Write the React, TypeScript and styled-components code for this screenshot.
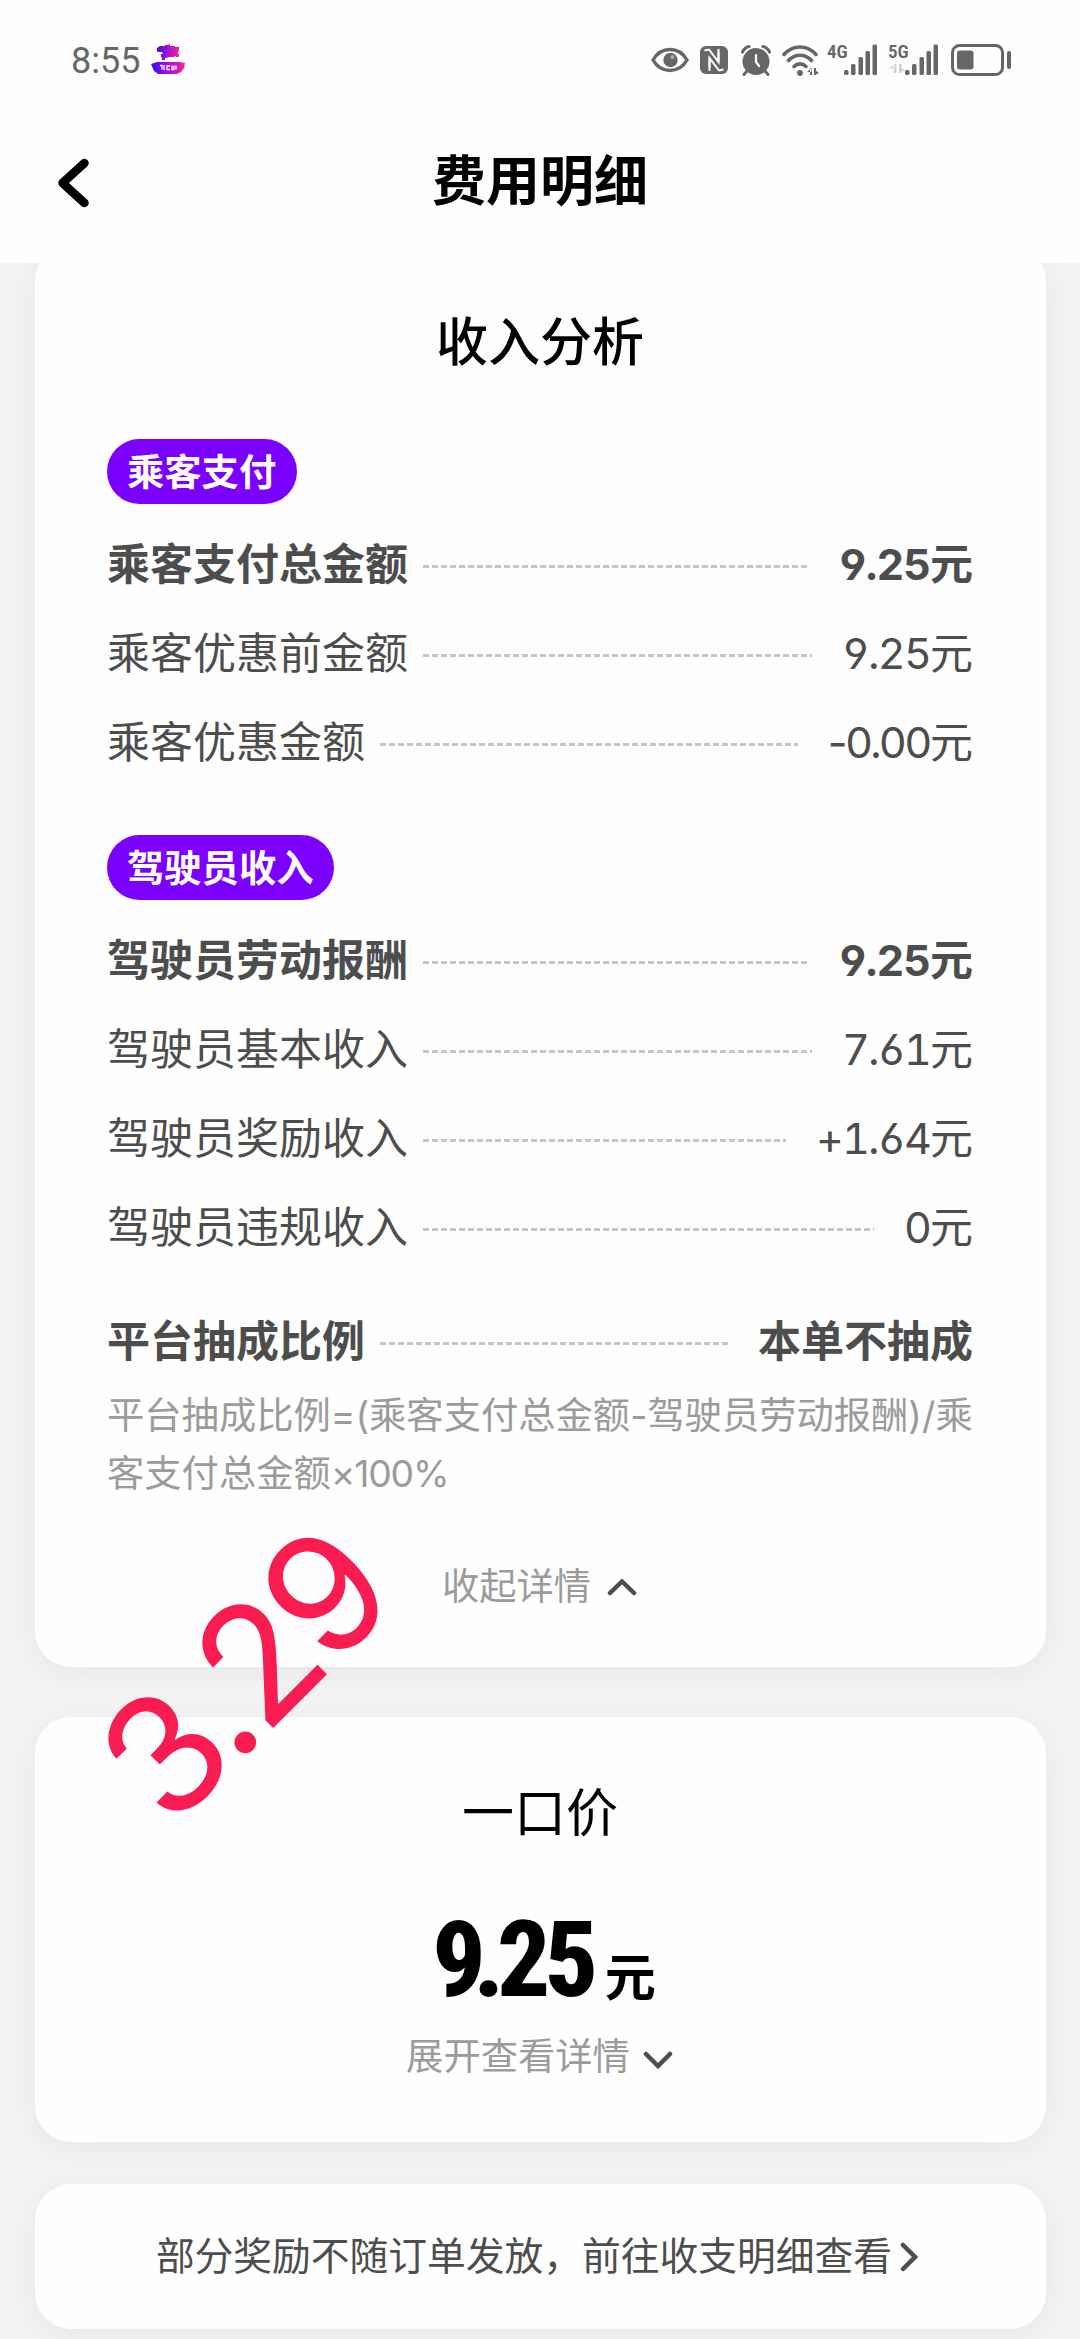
import React from "react";
import styled, { createGlobalStyle } from "styled-components";

const CJK = '"Noto Sans CJK SC", sans-serif';
const MIXED = 'Inter, "Noto Sans CJK SC", sans-serif';
const INK = "#4d4d4d";
const MUTED = "#9b9b9b";

const GlobalStyle = createGlobalStyle`
  * { box-sizing: border-box; }
  body { margin: 0; background: #f3f3f3; font-family: ${CJK}; }
`;

const Screen = styled.div`
  position: relative;
  width: 1080px;
  height: 2339px;
  overflow: hidden;
  background: #f3f3f3;
  color: ${INK};
`;

const Header = styled.header`
  position: relative;
  z-index: 1;
  height: 263px;
  background: #fefefe;
`;

const StatusBar = styled.div`
  display: flex;
  align-items: center;
  height: 120px;
  padding: 0 69px 0 71px;
  color: #666;
`;

const Clock = styled.span`
  font: 400 36px/40px Roboto, sans-serif;
  margin: 2px 10px 0 0;
  width: 70px;
`;

const StatusIcons = styled.div`
  display: flex;
  align-items: center;
  margin-left: auto;
`;

const Glyph = styled.svg<{ $gap?: number }>`
  display: block;
  flex: none;
  margin-left: ${(p) => p.$gap ?? 0}px;
`;

const Network = styled.div<{ $gap: number }>`
  display: flex;
  flex-direction: column;
  width: 17px;
  height: 32px;
  margin-left: ${(p) => p.$gap}px;
`;

const NetworkLabel = styled.span`
  font: 600 19px/15px "Roboto Condensed", Roboto, sans-serif;
  font-stretch: 75%;
  white-space: nowrap;
`;

const NavBar = styled.div`
  display: grid;
  grid-template-columns: 90px 1fr 90px;
  align-items: center;
  height: 115px;
`;

const BackButton = styled.button`
  display: flex;
  align-items: center;
  height: 100px;
  padding: 10px 0 0 56px;
  border: 0;
  background: none;
`;

const PageTitle = styled.h1`
  margin: 0;
  text-align: center;
  font-size: 54px;
  font-weight: 700;
  line-height: 115px;
  color: #000;
`;

const Content = styled.main`
  display: flex;
  flex-direction: column;
  margin-top: -18px;
  padding: 0 34px 0 35px;
`;

const Card = styled.section<{ $height: number; $gap?: number }>`
  flex: none;
  height: ${(p) => p.$height}px;
  margin-top: ${(p) => p.$gap ?? 0}px;
  padding: 0 73px 0 72px;
  border-radius: 36px;
  background: #fefefe;
  box-shadow: 0 6px 30px rgba(0, 0, 0, 0.055);
`;

const CardTitle = styled.h2<{ $top: number; $weight: number }>`
  margin: 0;
  padding-top: ${(p) => p.$top}px;
  text-align: center;
  font-size: 52px;
  font-weight: ${(p) => p.$weight};
  line-height: 80px;
  color: #000;
`;

const Pill = styled.div<{ $top: number }>`
  width: fit-content;
  height: 65px;
  margin: ${(p) => p.$top}px 0 13px;
  padding: 0 21px 0 20px;
  border-radius: 33px;
  background: #7c00ff;
  color: #fff;
  font-size: 37.3px;
  font-weight: 700;
  line-height: 63px;
`;

const Row = styled.div<{ $strong?: boolean; $top?: number }>`
  display: flex;
  align-items: baseline;
  height: 89px;
  margin-top: ${(p) => p.$top ?? 0}px;
  font-size: 43px;
  font-weight: ${(p) => (p.$strong ? 700 : 400)};
  line-height: 89px;
  white-space: nowrap;
`;

const Leader = styled.span`
  flex: 1;
  align-self: center;
  height: 3px;
  margin: 9px 30px 0 15px;
  background: repeating-linear-gradient(90deg, #c6c6c6 0 6px, transparent 6px 9px);
`;

const Figure = styled.span<{ $strong?: boolean; $tabular?: boolean }>`
  font-family: ${MIXED};
  font-feature-settings: "cv03", "cv04", "calt" 0${(p) => (p.$tabular ? ', "tnum"' : "")};
  font-variation-settings: "wght" ${(p) => (p.$strong ? 700 : 370)};
  letter-spacing: ${(p) => (p.$strong ? -1 : -1.8)}px;
`;

const Note = styled.p`
  margin: 4px 0 0;
  font-family: ${MIXED};
  font-feature-settings: "calt" 0;
  font-size: 37.3px;
  line-height: 58px;
  white-space: nowrap;
  color: ${MUTED};
`;

const Percent = styled.span`
  letter-spacing: -1.2px;
`;

const Toggle = styled.div<{ $top: number; $gap: number }>`
  display: flex;
  align-items: center;
  justify-content: center;
  gap: ${(p) => p.$gap}px;
  height: 60px;
  margin-top: ${(p) => p.$top}px;
  font-size: 37.3px;
  line-height: 60px;
  color: ${MUTED};
`;

const ToggleArrow = styled.svg`
  margin-top: 9px;
`;

const Price = styled.div`
  display: flex;
  align-items: baseline;
  justify-content: center;
  height: 110px;
  margin-top: 56px;
  padding-left: 8px;
  color: #000;
  line-height: 110px;
`;

const PriceDigits = styled.span`
  font-family: "Roboto Condensed", Roboto, sans-serif;
  font-stretch: 75%;
  font-size: 105px;
  font-weight: 800;
  letter-spacing: -5.5px;
`;

const PricePoint = styled.span`
  margin: 0 -2px 0 -7px;
`;

const PriceUnit = styled.span`
  margin-left: 12px;
  font-size: 51px;
  font-weight: 700;
`;

const HintLink = styled.a`
  display: flex;
  align-items: center;
  justify-content: center;
  height: 138px;
  padding-right: 6px;
  gap: 8px;
  font-size: 38.75px;
  line-height: 138px;
  white-space: nowrap;
`;

const HintArrow = styled.svg`
  margin-top: 8px;
`;

const DateStamp = styled.div`
  position: absolute;
  z-index: 2;
  left: 243px;
  top: 1675px;
  transform: translate(-50%, -50%) rotate(-45deg);
  font-family: Inter, sans-serif;
  font-size: 164px;
  letter-spacing: -6px;
  line-height: 1;
  color: #f91c50;
`;

type Item = { label: string; value: string; unit?: string; strong?: boolean };

const passenger: Item[] = [
  { label: "乘客支付总金额", value: "9.25", unit: "元", strong: true },
  { label: "乘客优惠前金额", value: "9.25", unit: "元" },
  { label: "乘客优惠金额", value: "-0.00", unit: "元" },
];

const driver: Item[] = [
  { label: "驾驶员劳动报酬", value: "9.25", unit: "元", strong: true },
  { label: "驾驶员基本收入", value: "7.61", unit: "元" },
  { label: "驾驶员奖励收入", value: "+1.64", unit: "元" },
  { label: "驾驶员违规收入", value: "0", unit: "元" },
];

function DetailRow({ label, value, unit, strong, top }: Item & { top?: number }) {
  return (
    <Row $strong={strong} $top={top}>
      <span>{label}</span>
      <Leader />
      {unit ? (
        <Figure $strong={strong} $tabular={!value.startsWith("-")}>
          {value}
        </Figure>
      ) : (
        <span>{value}</span>
      )}
      {unit && <span>{unit}</span>}
    </Row>
  );
}

function AppBadge() {
  return (
    <svg width="34" height="32" viewBox="0 0 34 32">
      <defs>
        <linearGradient id="badge" x1="0" x2="1">
          <stop offset="0.1" stopColor="#4a0bf0" />
          <stop offset="0.5" stopColor="#a80fd8" />
          <stop offset="1" stopColor="#f0289a" />
        </linearGradient>
      </defs>
      <path
        fill="url(#badge)"
        d="M6 4l3-2h5V1h4V0h1v2h5v1h2l2-1v5l-1 1v2h1v3h-3v-1l-2 1h-5l-3 1h-1v2h-3v-3h-1v-3h2l-1-2H7L6 7z"
      />
      <path fill="url(#badge)" d="M0 20l6-2h22l6 1-1 5-3 4-4 2H7l-4-3z" />
      <path
        d="M9 21.500h2v4M13 21v5M16 21v4.500h3M17 22h2M21 21.500v4h2v-4M25 21.500v4"
        fill="none"
        stroke="#fff"
        strokeWidth="1.300"
      />
    </svg>
  );
}

function Signal() {
  return (
    <Glyph width="33" height="32" viewBox="0 0 33 32" fill="#666">
      <rect x="0" y="26" width="4.500" height="5" rx="1.500" />
      <rect x="7" y="20" width="4.500" height="11" rx="1.500" />
      <rect x="14.500" y="13" width="4.500" height="18" rx="1.500" />
      <rect x="21.500" y="7" width="4.500" height="24" rx="1.500" />
      <rect x="28.500" y="0.500" width="4.500" height="30.500" rx="1.500" />
    </Glyph>
  );
}

function StatusGlyphs() {
  return (
    <StatusIcons>
      <Glyph width="38" height="26" viewBox="0 0 38 26">
        <path
          d="M2 13C10-1 28-1 36 13C28 27 10 27 2 13Z"
          fill="none"
          stroke="#666"
          strokeWidth="3.400"
        />
        <circle cx="19.500" cy="13" r="7.200" fill="#666" />
        <circle cx="21.500" cy="10" r="2" fill="#aaa" />
      </Glyph>
      <Glyph $gap={11} width="28" height="28" viewBox="0 0 28 28">
        <rect width="28" height="28" rx="6" fill="#666" />
        <path
          d="M4.500 4.500L9 3.500L18.500 16V6M23.500 23.500L19 24.500L9.500 12V22"
          fill="none"
          stroke="#fff"
          strokeWidth="2"
        />
        <path d="M9.500 12V25M18.500 16V3" fill="none" stroke="#fff" strokeWidth="2" />
      </Glyph>
      <Glyph $gap={13} width="30" height="31" viewBox="0 0 30 31">
        <circle cx="15" cy="16.500" r="13.500" fill="#666" />
        <path
          d="M1.500 7C3 4 5 2 8 1.500M28.500 7C27 4 25 2 22 1.500M6 26l-3 3.500M24 26l3 3.500"
          fill="none"
          stroke="#666"
          strokeWidth="3"
          strokeLinecap="round"
        />
        <path
          d="M15 10v7l3 4"
          fill="none"
          stroke="#fff"
          strokeWidth="2.200"
          strokeLinecap="round"
        />
      </Glyph>
      <Glyph $gap={11} width="37" height="31" viewBox="0 0 37 31">
        <g fill="none" stroke="#666" strokeWidth="3.600" strokeLinecap="round">
          <path d="M2 9.500C11-.5 25-.5 34 9.500" />
          <path d="M6.500 15.500C13 8.500 23 8.500 29.500 15.500" />
          <path d="M12 21.500C15.500 18 20.500 18 24 21.500" />
        </g>
        <circle cx="18" cy="28" r="2.900" fill="#666" />
        <path d="M25 27h4.500v-4zM28 23h2v7h-2zM32 23h2v7h-2zM33 30v-5l4 3z" fill="#666" />
      </Glyph>
      <Network $gap={8}>
        <NetworkLabel>4G</NetworkLabel>
      </Network>
      <Signal />
      <Network $gap={11}>
        <NetworkLabel>5G</NetworkLabel>
        <svg width="17" height="16" viewBox="0 0 17 16">
          <path
            d="M1 9.500h6V5.500zM6 5h2.500v9H6zM11 5h2.500v9H11zM12 13.500V8l5 3z"
            fill="#cfcfcf"
          />
        </svg>
      </Network>
      <Signal />
      <Glyph $gap={13} width="60" height="32" viewBox="0 0 60 32">
        <rect
          x="1.500"
          y="1.500"
          width="50"
          height="29"
          rx="7"
          fill="none"
          stroke="#666"
          strokeWidth="3"
        />
        <rect x="6" y="6.500" width="16.500" height="19" rx="3" fill="#666" />
        <rect x="56" y="7" width="4" height="18" rx="2" fill="#666" />
      </Glyph>
    </StatusIcons>
  );
}

export default function App() {
  return (
    <Screen>
      <GlobalStyle />
      <Header>
        <StatusBar>
          <Clock>8:55</Clock>
          <AppBadge />
          <StatusGlyphs />
        </StatusBar>
        <NavBar>
          <BackButton aria-label="返回">
            <svg width="34" height="50" viewBox="0 0 34 50">
              <path
                d="M28.500 5L6.500 25L28.500 45"
                fill="none"
                stroke="#000"
                strokeWidth="8.500"
                strokeLinecap="round"
                strokeLinejoin="round"
              />
            </svg>
          </BackButton>
          <PageTitle>费用明细</PageTitle>
        </NavBar>
      </Header>

      <Content>
        <Card $height={1422}>
          <CardTitle $top={54} $weight={500}>收入分析</CardTitle>
          <Pill $top={60}>乘客支付</Pill>
          {passenger.map((item) => (
            <DetailRow key={item.label} {...item} />
          ))}
          <Pill $top={51}>驾驶员收入</Pill>
          {driver.map((item) => (
            <DetailRow key={item.label} {...item} />
          ))}
          <DetailRow label="平台抽成比例" value="本单不抽成" strong top={25} />
          <Note>
            平台抽成比例=(乘客支付总金额-驾驶员劳动报酬)/乘
            <br />
            客支付总金额<Percent>×100%</Percent>
          </Note>
          <Toggle $top={51} $gap={15}>
            收起详情
            <ToggleArrow width="32" height="20" viewBox="0 0 32 20">
              <path
                d="M4 14L16 2.500L28 14"
                fill="none"
                stroke={INK}
                strokeWidth="4.500"
                strokeLinecap="round"
              />
            </ToggleArrow>
          </Toggle>
        </Card>

        <Card $height={425} $gap={50}>
          <CardTitle $top={53} $weight={400}>一口价</CardTitle>
          <Price>
            <PriceDigits>
              9<PricePoint>.</PricePoint>25
            </PriceDigits>
            <PriceUnit>元</PriceUnit>
          </Price>
          <Toggle $top={8} $gap={12}>
            展开查看详情
            <ToggleArrow width="32" height="20" viewBox="0 0 32 20">
              <path
                d="M4 5L16 17L28 5"
                fill="none"
                stroke={INK}
                strokeWidth="4.500"
                strokeLinecap="round"
              />
            </ToggleArrow>
          </Toggle>
        </Card>

        <Card $height={145} $gap={42}>
          <HintLink>
            部分奖励不随订单发放，前往收支明细查看
            <HintArrow width="18" height="30" viewBox="0 0 18 30">
              <path
                d="M3 3L15 15L3 27"
                fill="none"
                stroke={INK}
                strokeWidth="4.500"
                strokeLinecap="round"
              />
            </HintArrow>
          </HintLink>
        </Card>
      </Content>

      <DateStamp>3.29</DateStamp>
    </Screen>
  );
}
